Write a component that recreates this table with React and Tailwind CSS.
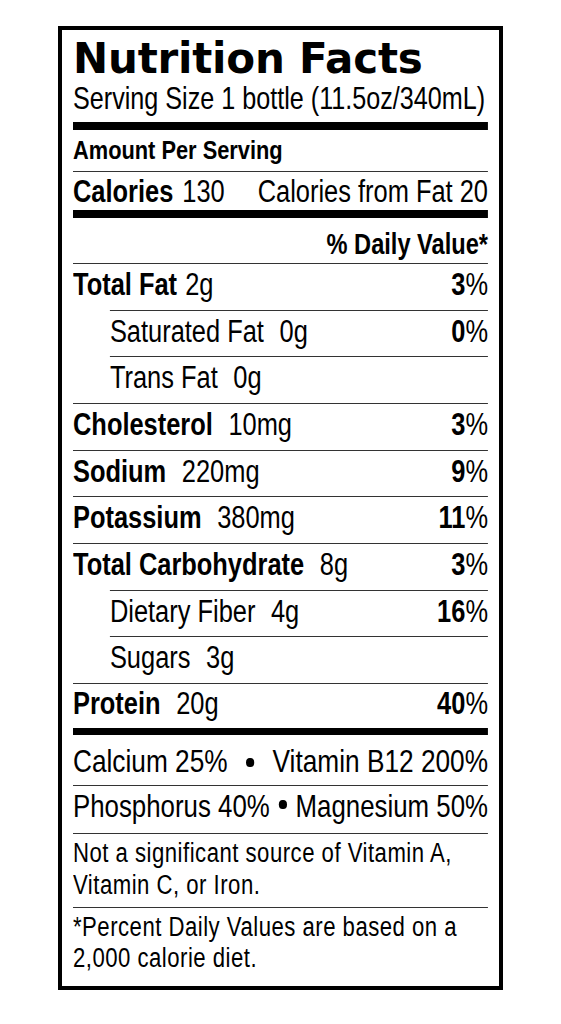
import React from "react";

// body of the label is set in Liberation Sans and squeezed horizontally
// to get the condensed Helvetica look of the printed panel
const rows = [
  { label: "Total Fat", value: "2g", pct: "3", gap: "ml-[10px]" },
  { label: "Saturated Fat", value: "0g", pct: "0", sub: true },
  { label: "Trans Fat", value: "0g", sub: true },
  { label: "Cholesterol", value: "10mg", pct: "3" },
  { label: "Sodium", value: "220mg", pct: "9" },
  { label: "Potassium", value: "380mg", pct: "11" },
  { label: "Total Carbohydrate", value: "8g", pct: "3" },
  { label: "Dietary Fiber", value: "4g", pct: "16", sub: true },
  { label: "Sugars", value: "3g", sub: true },
];

const Line = ({ indent }) => (
  <div className={`h-px bg-[#333] ${indent ? "ml-[45px]" : ""}`} />
);

const Pct = ({ n }) => (
  <span>
    <span className="font-bold">{n}</span>%
  </span>
);

const Dot = ({ top }) => (
  <span className={`block h-[8.5px] w-[10.4px] rounded-full bg-black ${top}`} />
);

const NutrientRow = ({ row }) => (
  <>
    <Line indent={row.sub} />
    <div
      className={`flex h-[45.67px] justify-between text-[31px] leading-[41.5px] ${
        row.sub ? "pl-[45px]" : ""
      }`}
    >
      <div>
        <span className={row.sub ? "" : "font-bold"}>{row.label}</span>
        <span className={row.gap || "ml-[19px]"}>{row.value}</span>
      </div>
      {row.pct ? <Pct n={row.pct} /> : null}
    </div>
  </>
);

export default function App() {
  return (
    <div className="min-h-screen bg-white pt-[26px] pl-[58px] text-black">
      <div className="w-[445px] border-4 border-black px-[11px]">
        <h1 className="h-[50px] whitespace-nowrap text-[42px] leading-[57px] font-bold tracking-[-0.2px] font-['DejaVu_Sans',sans-serif]">
          Nutrition Facts
        </h1>

        <div className="w-[506.1px] origin-top-left scale-x-[0.82] whitespace-nowrap font-['Liberation_Sans',Arial,sans-serif]">
          <p className="h-[42px] text-[30.7px] leading-[38.7px]">
            Serving Size 1 bottle (11.5oz/340mL)
          </p>
          <div className="h-[8px] bg-black" />

          <p className="h-[41px] text-[26.6px] leading-[41.6px] font-bold">
            Amount Per Serving
          </p>
          <Line />
          <div className="flex h-[38px] justify-between text-[31px] leading-[40.5px]">
            <div>
              <span className="font-bold">Calories</span>
              <span className="ml-[11px]">130</span>
            </div>
            <span>Calories from Fat 20</span>
          </div>
          <div className="h-[8px] bg-black" />

          <p className="h-[45px] text-right text-[28.8px] leading-[52px] font-bold">
            % Daily Value*
          </p>

          {rows.map((row) => (
            <NutrientRow key={row.label} row={row} />
          ))}

          <Line />
          <div className="flex h-[44px] justify-between text-[31px] leading-[40.5px]">
            <div>
              <span className="font-bold">Protein</span>
              <span className="ml-[19px]">20g</span>
            </div>
            <Pct n="40" />
          </div>
          <div className="h-[7px] bg-black" />

          <div className="flex h-[50px] items-start justify-between text-[32px] leading-[53.8px]">
            <span>Calcium 25%</span>
            <Dot top="mt-[23.5px]" />
            <span>Vitamin B12 200%</span>
          </div>
          <Line />
          <div className="flex h-[47px] items-start justify-between text-[31.5px] leading-[40.2px]">
            <span>Phosphorus 40%</span>
            <Dot top="mt-[14.5px]" />
            <span>Magnesium 50%</span>
          </div>
          <Line />
          <p className="h-[73px] pt-[3.5px] text-[27px] leading-[32px] tracking-[0.6px]">
            Not a significant source of Vitamin A,
            <br />
            Vitamin C, or Iron.
          </p>
          <Line />
          <p className="h-[78px] pt-[4px] text-[27px] leading-[31px] tracking-[0.6px]">
            *Percent Daily Values are based on a
            <br />
            2,000 calorie diet.
          </p>
        </div>
      </div>
    </div>
  );
}
